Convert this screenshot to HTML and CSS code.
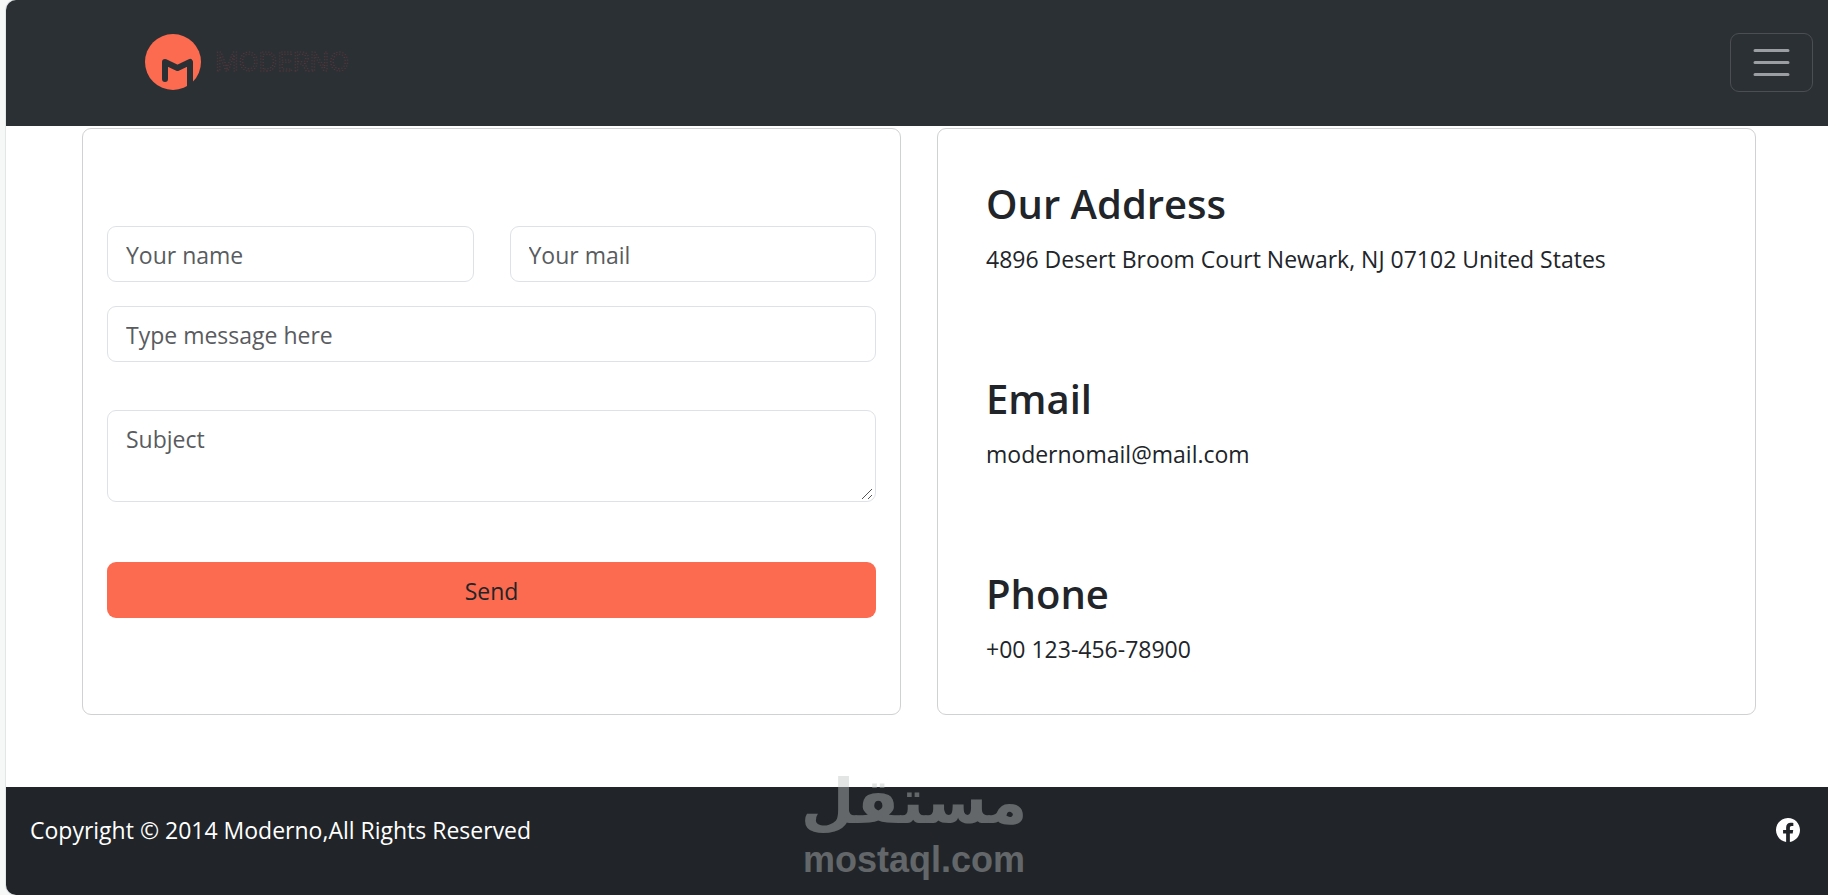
FILE: index.html
```html
<!DOCTYPE html>
<html lang="en">
<head>
    <meta charset="UTF-8">
    <meta name="viewport" content="width=device-width, initial-scale=1.0">
    <title>Moderno - Contact</title>
    <link rel="stylesheet" href="styles.css">
</head>
<body>
    <div class="page">
        <header class="navbar">
            <a href="#" class="brand" aria-label="Moderno">
                <svg class="brand-logo" width="240" height="56" viewBox="0 0 240 56">
                    <circle cx="28" cy="28" r="28" fill="#fc6b4f"/>
                    <path d="M20 45V28L32.500 34L45 28V58" fill="none" stroke="#2b3035" stroke-width="6" stroke-linecap="round" stroke-linejoin="round"/>
                    <text class="brand-name" x="70" y="37">MODERNO</text>
                </svg>
            </a>
            <button type="button" class="toggler" aria-label="Toggle navigation">
                <svg width="45" height="45" viewBox="0 0 30 30">
                    <path d="M4 7h22M4 15h22M4 23h22" stroke="#9b9ea3" stroke-width="2" stroke-linecap="round"/>
                </svg>
            </button>
        </header>

        <main class="contact">
            <form class="card form-card">
                <div class="form-row">
                    <input type="text" class="input-field" name="name" placeholder="Your name" aria-label="Your name">
                    <input type="email" class="input-field" name="mail" placeholder="Your mail" aria-label="Your mail">
                </div>
                <input type="text" class="input-field" name="message" placeholder="Type message here" aria-label="Type message here">
                <textarea class="input-field subject" name="subject" placeholder="Subject" aria-label="Subject"></textarea>
                <button type="submit" class="send">Send</button>
            </form>

            <section class="card info-card">
                <div>
                    <h2>Our Address</h2>
                    <p>4896 Desert Broom Court Newark, NJ 07102 United States</p>
                </div>
                <div>
                    <h2>Email</h2>
                    <p>modernomail@mail.com</p>
                </div>
                <div>
                    <h2>Phone</h2>
                    <p>+00 123-456-78900</p>
                </div>
            </section>
        </main>

        <footer class="footer">
            <p>Copyright © 2014 Moderno,All Rights Reserved</p>
            <a href="#" class="social" aria-label="Facebook">
                <svg width="24" height="24" viewBox="0 0 16 16" fill="currentColor">
                    <path d="M16 8.049c0-4.446-3.582-8.050-8-8.050C3.580 0-.002 3.603-.002 8.050c0 4.017 2.926 7.347 6.750 7.951v-5.625h-2.030V8.050H6.750V6.275c0-2.017 1.195-3.131 3.022-3.131.876 0 1.791.157 1.791.157v1.980h-1.009c-.993 0-1.303.621-1.303 1.258v1.510h2.218l-.354 2.326H9.250V16c3.824-.604 6.750-3.934 6.750-7.951"/>
                </svg>
            </a>
        </footer>
    </div>

    <div class="watermark">
        <span class="watermark-ar" lang="ar">مستقل</span>
        <span class="watermark-en">mostaql.com</span>
    </div>
</body>
</html>
```
FILE: styles.css
```css
* {
    box-sizing: border-box;
}

body {
    margin: 0;
    position: relative;
    font-family: 'Segoe UI', 'Open Sans', 'Noto Sans', sans-serif;
    font-size: 23px;
    line-height: 36px;
    color: #212529;
    background-color: #f6f8f8;
}

h2, p {
    margin: 0;
}

.page {
    margin-left: 6px;
    background-color: #fff;
    border-radius: 10px 0 0 10px;
    box-shadow: 0 0 0 1px #e3e6e7;
    overflow: hidden;
}

.navbar {
    display: flex;
    justify-content: space-between;
    align-items: center;
    height: 126px;
    padding: 0 15px 2px 139px;
    background-color: #2b3035;
}

.brand, .brand-logo {
    display: block;
}

.brand-name {
    font-family: Inter, sans-serif;
    font-size: 26px;
    fill: none;
    stroke: #63383a;
    stroke-width: 1px;
    stroke-dasharray: 1 2;
}

.toggler {
    display: flex;
    padding: 6px 18px;
    background: none;
    border: 1px solid #4b4f54;
    border-radius: 9px;
    cursor: pointer;
}

.contact {
    display: grid;
    grid-template-columns: 1fr 1fr;
    gap: 36px;
    padding: 2px 72px 72px 76px;
}

.card {
    border: 1px solid #d0d1d2;
    border-radius: 9px;
}

.form-card {
    display: flex;
    flex-direction: column;
    gap: 24px;
    padding: 97px 24px 96px;
}

.form-row {
    display: grid;
    grid-template-columns: 1fr 1fr;
    gap: 36px;
}

.input-field {
    width: 100%;
    height: 56px;
    padding: 10px 18px 8px;
    border: 1px solid #dee2e6;
    border-radius: 9px;
    font: inherit;
    color: #212529;
    background-color: #fff;
}

.input-field::placeholder {
    color: #595c5f;
    opacity: 1;
}

.subject {
    display: block;
    height: 92px;
    margin: 24px 0 36px;
    resize: vertical;
}

.subject::-webkit-resizer {
    background: url("data:image/svg+xml,%3Csvg xmlns='http://www.w3.org/2000/svg' width='15' height='15'%3E%3Cpath d='M2 13L12 3M8 13L12 9' stroke='%23555' stroke-width='1'/%3E%3C/svg%3E") no-repeat;
}

.send {
    height: 56px;
    padding: 2px 18px 0;
    border: none;
    border-radius: 9px;
    font: inherit;
    color: #212529;
    background-color: #fc6b4f;
    cursor: pointer;
}

.info-card {
    display: flex;
    flex-direction: column;
    justify-content: space-between;
    padding: 50px 48px 47px;
}

.info-card h2 {
    margin-bottom: 12px;
    font-size: 40px;
    font-weight: 600;
    line-height: 50px;
}

.footer {
    display: flex;
    justify-content: space-between;
    align-items: flex-start;
    height: 108px;
    padding: 25px 28px 0 24px;
    color: #fff;
    background-color: #212529;
}

.social {
    display: flex;
    padding: 6px 0;
    color: #fff;
}

/* stamp over the bottom of the page */
.watermark {
    position: absolute;
    left: 0;
    right: 0;
    bottom: 14px;
    display: flex;
    flex-direction: column;
    align-items: center;
    font-weight: bold;
    color: #bec2c2;
    opacity: 0.42;
    pointer-events: none;
}

.watermark-ar {
    font-family: 'DejaVu Sans', sans-serif;
    font-size: 62px;
    line-height: 74px;
}

.watermark-en {
    font-family: 'Liberation Sans', Arial, sans-serif;
    font-size: 36px;
    line-height: 42px;
}
```
